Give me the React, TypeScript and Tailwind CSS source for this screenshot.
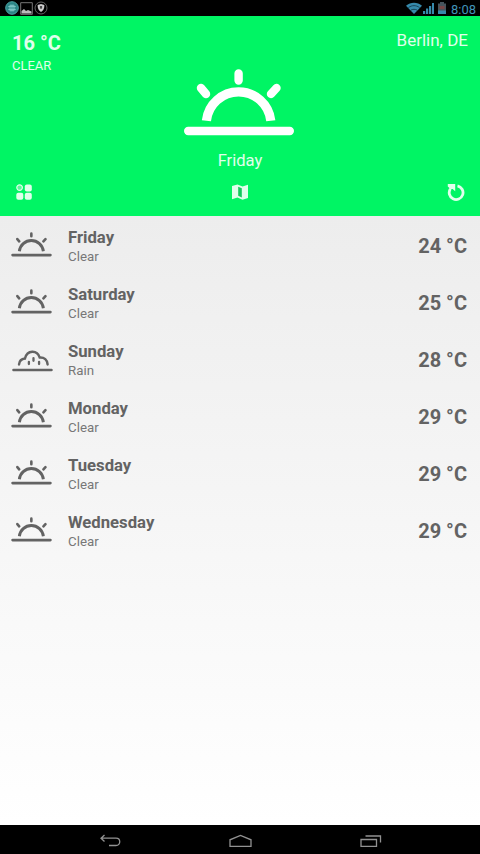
import type { ReactNode } from 'react';

type Forecast = {
  day: string;
  condition: 'Clear' | 'Rain';
  temp: number;
};

const forecast: Forecast[] = [
  { day: 'Friday', condition: 'Clear', temp: 24 },
  { day: 'Saturday', condition: 'Clear', temp: 25 },
  { day: 'Sunday', condition: 'Rain', temp: 28 },
  { day: 'Monday', condition: 'Clear', temp: 29 },
  { day: 'Tuesday', condition: 'Clear', temp: 29 },
  { day: 'Wednesday', condition: 'Clear', temp: 29 },
];

function SunIcon({ className, stroke = 8.4 }: { className: string; stroke?: number }) {
  return (
    <svg viewBox="0 0 110 67" fill="none" stroke="currentColor" strokeWidth={stroke} className={className}>
      <path d="M22.4 51.7A32.4 32.4 0 0 1 86.8 51.7" strokeWidth={stroke + 0.8} />
      <path d="M54.6 4.4V11.5M17 19L22 25M92.5 19L87 25M4.2 62H105.8" strokeLinecap="round" />
    </svg>
  );
}

function RainIcon({ className }: { className: string }) {
  return (
    <svg viewBox="0 0 124 67" fill="none" stroke="currentColor" strokeWidth="7.5" strokeLinecap="round" className={className}>
      <path d="M4 61H120" />
      <path d="M21 44C22 34 29 27 39 26C46 -1 76 -1 84 23C98 22 107 31 108 44" strokeWidth="7.5" />
      <path d="M65 25V33M51 36V43M82 36V43" strokeWidth="7" />
    </svg>
  );
}

function StatusBar() {
  return (
    <div className="flex h-4 items-center justify-between bg-black pl-[5px] pr-1">
      <div className="flex h-4 items-center gap-px">
        <svg viewBox="0 0 14 14" className="h-3.5 w-3.5" fill="none">
          <circle cx="7" cy="7" r="6.3" fill="#2b8485" stroke="#4ba4a4" />
          <path d="M5 4.2H9V9.8H5ZM3.2 5.6H10.8M3.2 8.4H10.8M7 4V10" stroke="#8bd0cf" strokeWidth=".8" />
        </svg>
        <svg viewBox="0 0 13 13" className="h-[13px] w-[13px]" fill="none">
          <path d="M.7 .7H12.3V12.3H.7Z" stroke="#777" />
          <path d="M1.5 11.5V9L4 7L6 9L8 8L11.5 9.5V11.5Z" fill="#bbb" />
        </svg>
        <svg viewBox="0 0 14 14" className="h-3.5 w-3.5" fill="none">
          <circle cx="7" cy="7" r="6" stroke="#666" />
          <path d="M3.6 4L7 3L10.4 4C10.4 7.5 9.5 9.5 7 11C4.5 9.5 3.6 7.5 3.6 4Z" fill="#ccc" />
          <path d="M7 5V8M5.8 6H8.2" stroke="#222" />
        </svg>
      </div>
      <div className="flex h-4 items-center text-[#3689ab]">
        <svg viewBox="0 0 16 12" className="h-3 w-4" fill="currentColor">
          <path d="M0 3.8C4.5 -.4 11.5 -.4 16 3.8L8 12Z" />
          <path d="M2.4 5.6C6 3 10 3 13.6 5.6M4.8 8.2C6.5 7 9.5 7 11.2 8.2" fill="none" stroke="#0a2733" strokeWidth=".7" />
        </svg>
        <svg viewBox="0 0 12 12" className="h-3 w-3" fill="currentColor">
          <path d="M1 9H3.2V12H1ZM4 6.5H6.2V12H4ZM7 4H9.2V12H7ZM10 1H12V12H10Z" />
        </svg>
        <svg viewBox="0 0 8 12" className="ml-1 h-3 w-2">
          <path d="M2 0H6V1.5H8V12H0V1.5H2Z" fill="#46545c" />
          <path d="M0 8.5H8V12H0Z" fill="#3689ab" />
          <path d="M1.5 4H6.5V7H1.5Z" fill="#784747" />
        </svg>
        <span className="ml-[5px] mt-[3px] text-[13px] leading-none text-[#4193b8]">8:08</span>
      </div>
    </div>
  );
}

function Toolbar() {
  return (
    <div className="flex h-5 items-center justify-between text-[#e0ffec]">
      <svg viewBox="0 0 16 16" className="ml-1 h-4 w-4" fill="currentColor">
        <circle cx="3.6" cy="3.6" r="2.8" fill="#5ef79a" stroke="currentColor" strokeWidth="1.2" />
        <rect x="8.8" y=".4" width="7" height="7" rx="2" />
        <rect x=".3" y="8.8" width="7" height="7" rx="2" />
        <rect x="8.8" y="8.8" width="7" height="7" rx="2" />
      </svg>
      <svg viewBox="0 0 16 16" className="h-4 w-4" fill="currentColor">
        <path d="M0 2L5.5 .5L10.5 2.5L16 .8V14L10.5 15.7L5.5 13.5L0 15.3Z" />
        <path d="M6.2 2.8L9.8 4.3V13.4L6.2 11.8Z" fill="#12c95c" />
      </svg>
      <svg viewBox="0 0 18 18" className="mr-[3px] h-[18px] w-[18px]" fill="none">
        <path d="M3.4 5.8A6.9 6.9 0 1 0 10.5 2.9" stroke="currentColor" strokeWidth="2.8" />
        <path d="M.8 1H8.2V8.2L5.7 6L3.4 6L.8 3.4Z" fill="currentColor" />
      </svg>
    </div>
  );
}

function Header() {
  return (
    <header className="flex h-[200px] flex-col bg-[#00f564] px-3 text-[#e0ffec]">
      <div className="flex h-[53px] items-start justify-between pt-[14px]">
        <div>
          <div className="pt-px text-[20px] font-bold leading-6">16 °C</div>
          <div className="pt-[3px] text-[13px] leading-4">CLEAR</div>
        </div>
        <div className="text-[17px] leading-5">Berlin, DE</div>
      </div>
      <div className="flex h-[113px] flex-col items-center">
        <SunIcon className="mr-[3px] h-[67px] w-[110px] shrink-0 text-white" />
        <div className="pt-[15px] text-[16.6px] leading-5">Friday</div>
      </div>
      <Toolbar />
    </header>
  );
}

function ForecastRow({ day, condition, temp }: Forecast) {
  return (
    <li className="flex h-[57px] items-center pl-[11px] pr-[13px] text-[#636363]">
      {condition === 'Rain' ? (
        <RainIcon className="ml-px h-[22px] w-[41px] translate-y-0.5" />
      ) : (
        <SunIcon className="mr-px h-[25px] w-[41px]" stroke={7} />
      )}
      <div className="ml-[15px] grow pt-[3px]">
        <div className="text-[16.7px] font-bold leading-[21px]">{day}</div>
        <div className="text-[13.3px] leading-[18px] text-[#777]">{condition}</div>
      </div>
      <div className="pt-[3px] text-[20px] font-bold">{temp} °C</div>
    </li>
  );
}

function NavIcon({ children }: { children: ReactNode }) {
  return (
    <svg viewBox="0 0 24 14" className="h-3.5 w-6" fill="none" stroke="#929292" strokeWidth="1.3">
      {children}
    </svg>
  );
}

export default function App() {
  return (
    <div className="flex h-[854px] w-[480px] flex-col overflow-hidden font-['Roboto',sans-serif]">
      <StatusBar />
      <Header />
      <ul className="grow bg-linear-to-b from-[#ededed] to-white">
        {forecast.map((item) => (
          <ForecastRow key={item.day} {...item} />
        ))}
      </ul>
      <nav className="flex h-[29px] items-center justify-between bg-black px-[98px] pt-0.5">
        <NavIcon>
          <path d="M6.5 1L3 4.2L6.5 7.5M3 4.2H18C23 4.2 23 11.5 18 11.5H11" />
        </NavIcon>
        <NavIcon>
          <path d="M2 12.3V5.8L12.5 1.5L23 5.8V12.3Z" />
        </NavIcon>
        <NavIcon>
          <path d="M3 5.5H18.5V12.3H3ZM7.5 2H22.5V8.5" />
        </NavIcon>
      </nav>
    </div>
  );
}
